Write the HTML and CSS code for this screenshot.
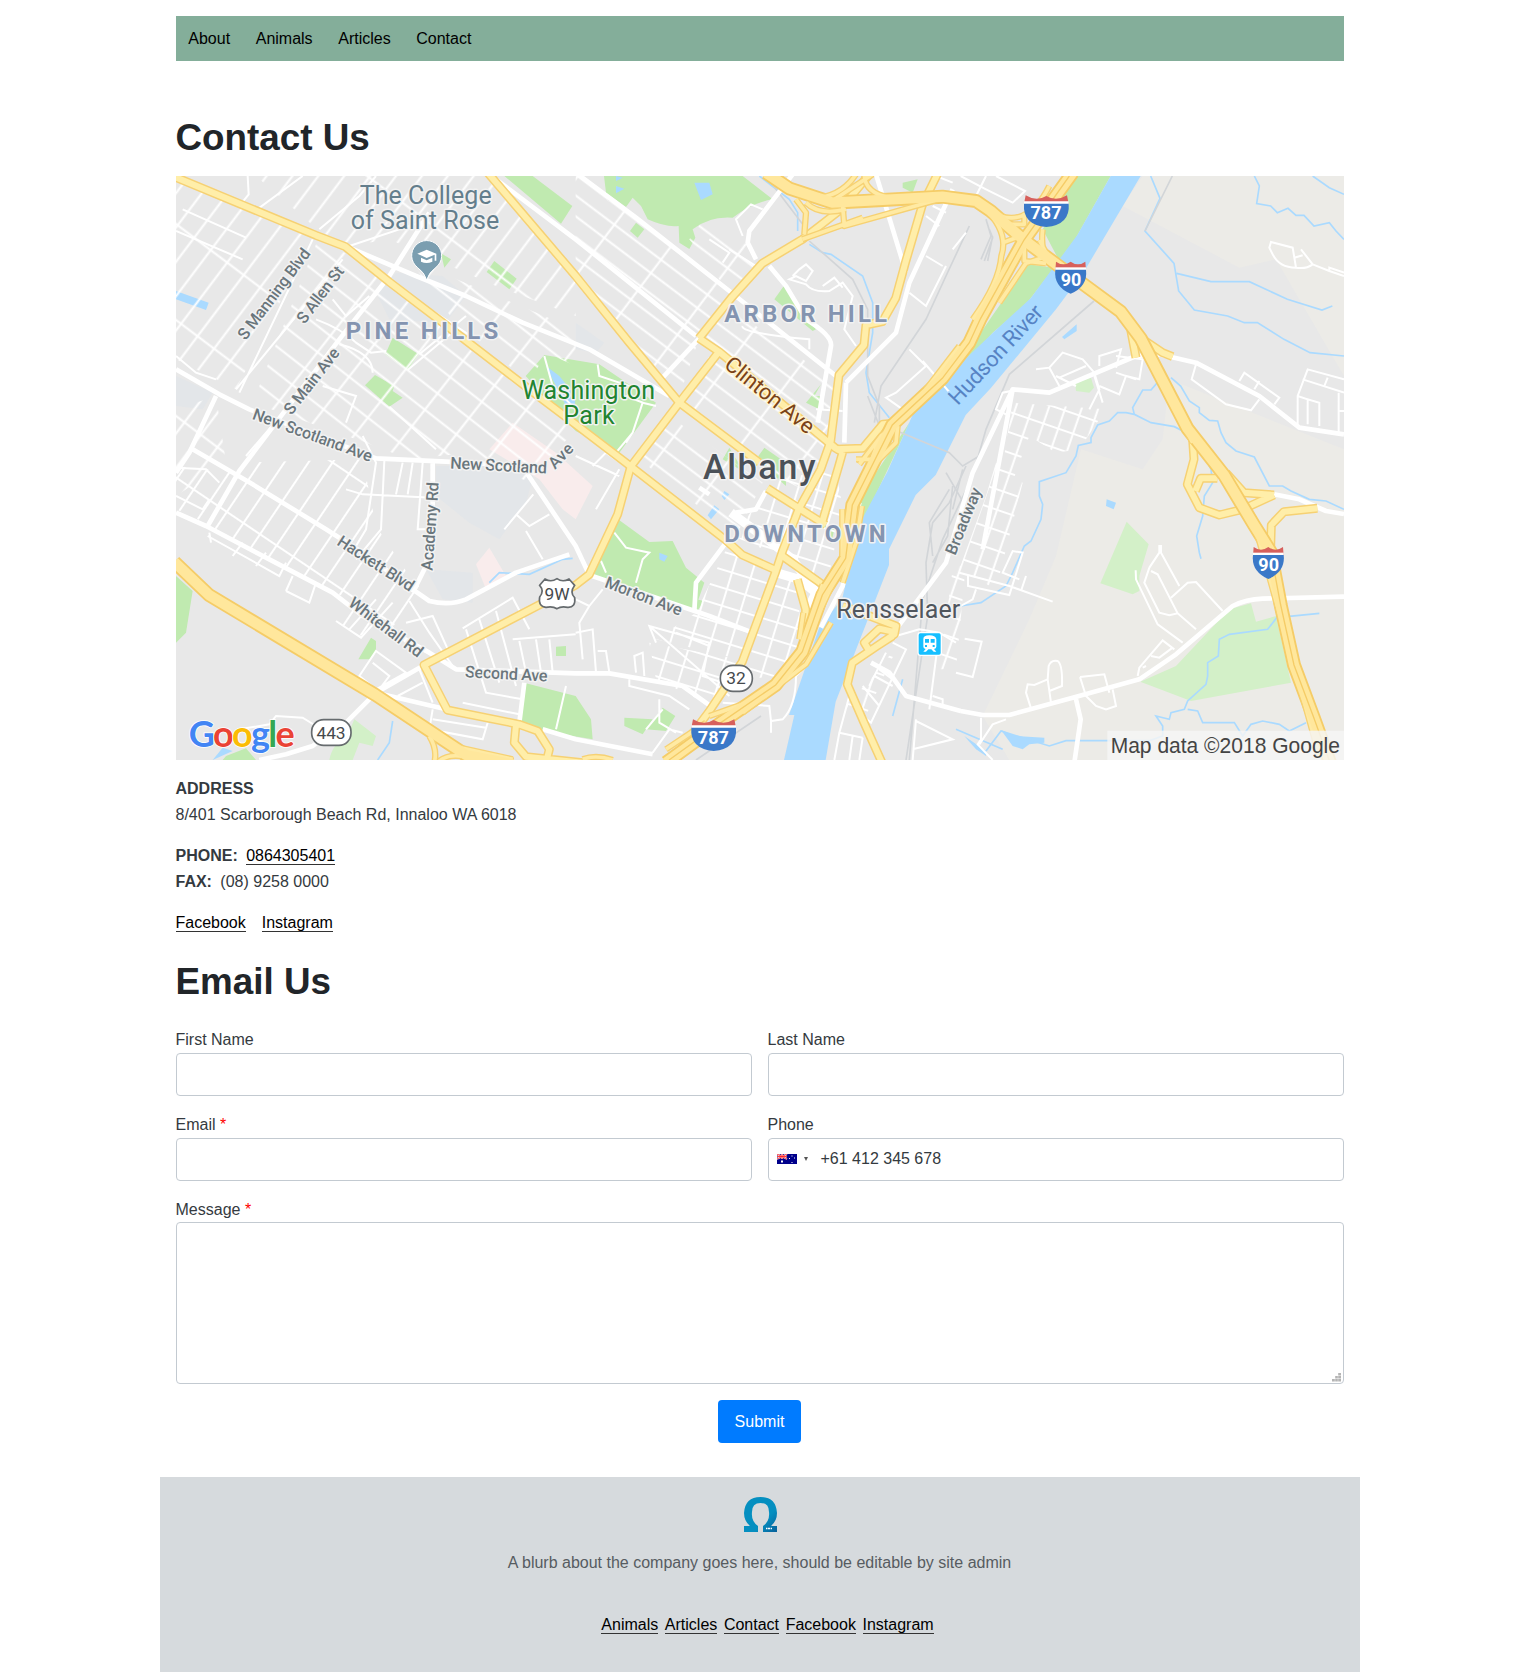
FILE: index.html
```html
<!DOCTYPE html>
<html lang="en">
<head>
<meta charset="utf-8">
<title>Contact Us</title>
<link rel="stylesheet" href="styles.css">
</head>
<body>
<div class="page">
<nav class="nav"><a href="#">About</a><a href="#">Animals</a><a href="#">Articles</a><a href="#">Contact</a></nav>
<main>
<h1>Contact Us</h1>
<svg class="map" viewBox="0 0 3504 1752" role="img" aria-label="Map of Albany">
<defs>
<pattern id="gridWest" width="62" height="230" patternUnits="userSpaceOnUse" patternTransform="rotate(37)"><path class="street" d="M31 0V230M0 115H62"/></pattern>
<pattern id="gridPine" width="120" height="62" patternUnits="userSpaceOnUse" patternTransform="rotate(38)"><path class="street" d="M60 0V62M0 31H120"/></pattern>
<pattern id="gridHill" width="175" height="50" patternUnits="userSpaceOnUse" patternTransform="rotate(37)"><path class="street" d="M88 0V50M0 25H175"/></pattern>
<pattern id="gridDown" width="58" height="52" patternUnits="userSpaceOnUse" patternTransform="rotate(17)"><path class="street" d="M29 0V52M0 26H58"/></pattern>
<pattern id="gridSouth" width="60" height="300" patternUnits="userSpaceOnUse" patternTransform="rotate(34)"><path class="street" d="M30 0V300M0 150H60"/></pattern>
<pattern id="gridEast" width="47" height="58" patternUnits="userSpaceOnUse" patternTransform="rotate(19)"><path class="street" d="M23 0V58M0 29H47"/></pattern>
<g id="arterials">
<path d="M-10 0L299 128 420 178 508 212 640 318 800 440 1060 640 1199 745 1365 872 1649 1092 1699 1137 1799 1182"/>
<path d="M935-10L1199 300 1360 500 1510 680 1750 860M1774 937L1869 997 1949 1047"/>
<path d="M1569 487L1629 527 1979 817 2000 828"/>
<path d="M1569 487L1669 362 1759 262 1879 190 1989 105 2080-5"/>
<path d="M1629 527L1510 680 1364 872 1325 1015 1240 1195 1199 1227 1089 1287 744 1467 814 1602 1029 1645 1085 1665 1120 1720 1110 1760M1020 1645L1015 1700 1050 1742 1220 1760"/>
<path d="M2284-5L2239 87 2189 257 2159 367 2119 437 2070 447 2064 507 1989 597 1964 795 1934 880 1869 997 1819 1127 1799 1187 1699 1457 1599 1607 1480 1765"/>
<path d="M1979 820L2060 817 2120 745 2155 742M2000 828L1989 867 1939 1037M1819 1140L1939 1225M1864 1210L1889 1300 1885 1400"/>
<path d="M2864 460L2880 545M2900 490L2960 530 2990 542M3050 790L3054 850 3034 925 3070 995 3130 1017 3200 1000 3294 957M3058 945L3074 907 3124 907M3150 890L3204 950 3294 957M3284 1110L3286 1047 3324 1007 3424 997"/>
<path d="M2000 1290L2060 1312 2160 1350 2155 1375 2029 1460 2014 1525 2064 1640 2119 1762M2150 1367L2110 1358 2065 1400 2080 1425 2150 1380"/>
</g>
<g id="highways">
<path d="M1770-10L1839 37 1969 80 2299 62 2400 75 2444 105 2544 192 2644 267 2834 407 2894 487 3034 757 3144 897 3234 1047 3284 1127 3314 1287 3354 1467 3414 1627 3464 1765"/>
<path d="M2690-10L2544 192 2414 427 2380 500 2299 607 2149 747 2089 867 2029 987 2009 1147 1939 1257 1879 1427 1799 1527 1639 1637 1470 1760"/>
<path d="M-5 1158L99 1257 599 1557 870 1737 1010 1765"/>
</g>
<g id="ramps">
<path d="M1860 70L1890 110 1885 175M1960 80L2090-5M1900 65Q1990 70 2040-5M2065-5Q2065 50 2140 65M1890 80Q1930 120 2010 100M2000 90L2005 150 2300 67M1879 190L2060 125"/>
<path d="M2425 95Q2500 170 2476 240Q2470 320 2390 430M2440 105Q2550 170 2620 30M2490 145H2545V110M2550 200Q2490 290 2400 465M2640 265Q2590 245 2600 160M2480 200L2520 185M2590 192L2615 240 2550 262 2470 380M2545 192V255L2610 262"/>
<path d="M2250 640L2350 510M2160 745L2115 780 2050 865M2165 750L2160 800 2070 890 2025 1010M2040 850H2090M2110 790L2035 990M1999 1000V1140M2058 990L2040 1100 2000 1220M1990 1180L1920 1330M1965 1340L1890 1465 1700 1610M1870 1390L1882 1310M1940 1225L1905 1340M1600 1620L1770 1560M1590 1640L1470 1720"/>
<path d="M760 1680Q785 1720 775 1760M830 1710L1010 1750M790 1755Q820 1730 880 1745M2900 505L3050 800M3240 1060L3430 1740M1220 1750Q1260 1735 1310 1752"/>
</g>
<g id="shieldWide"><path fill="#d7605c" d="M-62-45Q-30-25 0-43Q30-25 62-45L67-20H-67Z"/><path fill="#fff" d="M-67-27H67V-15H-67Z"/><path fill="#3a78c8" d="M-67-20H67Q72 43 0 50Q-72 43-67-20Z"/></g>
<g id="shield90"><path fill="#d7605c" d="M-44-46Q-22-30 0-46Q22-30 44-46L46-20H-46Z"/><path fill="#fff" d="M-46-29H46V-17H-46Z"/><path fill="#3a78c8" d="M-46-22H46Q52 28 0 50Q-52 28-46-22Z"/></g>
</defs>

<rect width="3504" height="1752" fill="#e8e8e8"/>
<g fill="#ecebe7">
<path d="M2900 0H3504V600L3300 250 3190 275 2840 90ZM2980 610L3504 820V1752H2500L2420 1620 2560 1330 2640 1140 2715 820 2900 880 2960 790Z"/>
</g>
<g fill="#e3e6e9"><path d="M600 350L660 290 800 300 870 360 820 425 780 440 640 430ZM780 870H1080L1050 980 970 1090 880 1040 780 960ZM750 1180L890 1190 890 1280 800 1270ZM0 600L110 650 80 700 0 690ZM1199 440L1285 500 1260 530 1199 520Z"/></g>
<g fill="#f9ecec"><path d="M1010 740L1140 830 1250 930 1199 1030 1160 1000 1090 910 940 820ZM900 1165L940 1115 990 1200 930 1240Z"/></g>
<g class="park">
<path d="M1284 0H1700L1790 70Q1730 80 1670 125Q1600 120 1550 160L1558 185 1540 219 1510 200 1508 150Q1470 155 1415 130L1395 90 1370 65 1350 93 1290 50Z"/>
<path d="M985 0H1070L1189 90 1155 143ZM955 255L1022 308 1000 340 932 288ZM795 232L825 250 805 275ZM650 485L728 535 695 582 628 535ZM597 597L655 630 650 645 680 665 640 692 567 628Z"/>
<path d="M1105 537L1270 565 1440 680 1330 830 1199 765 1049 600ZM1380 140L1405 160 1385 185 1362 165ZM1825 328L1860 380 1920 460 1910 465 1795 370ZM1935 625L1915 660 1940 660 1930 700 1890 680ZM1660 815L1640 850 1690 880 1690 865ZM1765 815L1740 850 1830 930 1830 860ZM2180 20L2225 10 2210 50 2180 35Z"/>
<path d="M2700 0H2804L2700 185 2650 255 2600 160ZM2555 265L2635 275 2550 385 2450 470 2340 600 2210 720 2140 870 2060 1040 2030 1080 2060 950 2200 740 2380 520Z"/>
<path d="M1320 1025L1420 1098 1490 1095 1530 1175 1585 1220 1555 1305 1250 1195 1300 1090ZM1560 1270L1585 1275 1560 1310ZM0 1200L50 1245 30 1370 0 1400ZM585 1385L600 1395 600 1430 580 1450 547 1450ZM1050 1522L1199 1560 1245 1630 1250 1690 1190 1680 1032 1655ZM1345 1625L1430 1630 1400 1675 1345 1650ZM1460 1595L1498 1620 1470 1665 1410 1660ZM1140 1412L1170 1410V1440L1140 1440ZM150 1740L210 1717 240 1752H140ZM1940 1045L1975 1060 1965 1105Z"/>
<g fill="#d3f0c8"><path d="M535 1630L600 1680 590 1710 550 1700 530 1752H460Q470 1700 510 1690ZM2852 1037L2918 1105 2890 1200 2890 1245 2870 1255 2773 1222ZM2893 1517L3000 1470 3160 1300 3225 1282 3240 1337 3300 1320 3345 1520 3045 1575ZM2697 620L2745 605 2754 635 2740 650 2700 645Z"/></g>
</g>
<g class="water">
<path d="M2804 0L2704 177 2564 367 2454 467 2349 567 2219 697 2134 887 2049 1047 1999 1267 1929 1357 1839 1617H1855L1824 1752H1949L1979 1577 2069 1347 2139 1167V1120L2219 957 2279 897 2369 717 2444 637 2640 400 2724 287 2894 0Z"/>
<path d="M0 345L98 380 90 402 0 370ZM1110 570L1150 600 1199 660 1195 700 1170 690ZM1555 20L1600 20 1610 55 1575 72ZM1320 0L1340 5 1320 15ZM1320 30L1345 38 1320 52ZM1450 1130L1475 1140 1465 1157 1450 1150ZM2658 483L2702 445V465L2665 490ZM2792 970L2820 980 2813 1000 2790 990ZM1645 945L1660 955 1645 972 1637 960ZM1615 988L1630 1000 1605 1030 1595 1018ZM2475 1662L2520 1680 2605 1685V1700L2560 1705 2540 1720 2510 1710ZM2365 1680L2430 1725V1740L2400 1720ZM140 1715L170 1725 110 1752Z"/>
</g>
<g class="stream">
<path d="M1750 0L1840 70 1865 110 1865 165M1900 205L1940 230 1965 235 2060 300 2090 380V470L2070 590 2080 650 2140 725"/>
<path d="M2924 0L2952 67 2907 165 2994 262 3008 345 3055 402 3155 420 3205 440 3244 440 3324 490 3402 530 3504 540M3002 292L3105 317H3220L3334 370 3438 402 3469 390"/>
<path d="M3235 0L3250 30 3242 83 3284 90 3304 110 3336 97 3360 118H3384L3414 150 3460 140 3480 165 3504 190M3410 0L3460 35 3504 55"/>
<path d="M2944 620L2925 642H2900L2870 695 2875 715 2925 740 2995 752 3060 785 3105 880M2875 715L2850 710 2825 710 2800 735 2765 747 2745 785V800L2707 808 2700 840 2670 890 2590 917V960L2600 985 2595 1030 2565 1095 2545 1110 2510 1190 2490 1230 2415 1280 2354 1290 2310 1300"/>
<path d="M2985 605L3014 630 3040 675 3070 695V710L3100 733 3125 735 3135 770 3150 800 3180 825 3235 843 3280 930 3320 930 3345 945 3400 970 3450 975 3504 1000M3105 880L3110 920 3085 960 3080 1020 3062 1080 3070 1130 3075 1148M3430 1312L3302 1325 3275 1360 3160 1375 3130 1390 3127 1440 3095 1460V1500L3090 1525 3035 1575 3025 1600 2985 1610 2980 1630 2940 1620 2960 1650V1680L2920 1694H2670L2620 1710 2475 1665 2430 1725M3035 1600L3065 1605 3080 1640H3175L3200 1680 3225 1645 3260 1635 3310 1645 3340 1665 3390 1640M2150 1620L2180 1510M2340 1660L2480 1720M650 1635L640 1700 605 1752M940 1220L970 1190 1060 1195 1160 1150 1190 1147"/>
</g>
<g class="rail">
<path d="M1770 0L1880 145M1900 195L2030 310 2075 400V600L2110 690V750L2075 660M2380 150L2310 300 2250 430 2115 630 2095 740M2140 755L2320 830 2360 870 2410 840M2989 0L2907 165M2754 375L2500 595 2430 760 2390 900 2300 1090 2240 1270 2200 1752M2370 870L2320 980 2270 1040 2250 1160 2255 1320 2190 1752M2320 940L2260 1040 2270 1140M2330 930L2315 1080 2270 1160M1755 1620L1560 1752"/>
<path d="M2430 130L2445 180 2415 250M2440 160L2450 185 2425 255M2450 180L2435 255M2310 890L2380 1010M2360 880L2330 1000"/>
</g>

<path fill="url(#gridWest)" d="M0 10L410 185 180 640 0 550ZM0 700L120 660 150 860 0 960Z"/>
<path fill="url(#gridWest)" d="M240 0H930L1100 190 1199 320 1199 420 960 330 640 190 520 210 430 165Z"/>
<path fill="url(#gridPine)" d="M430 180L640 320 880 520 1199 760 1060 920 880 830 700 850 570 800 230 680Z"/>
<path fill="url(#gridPine)" d="M700 250L1199 460 1199 570 1110 530 1060 620 830 430Z"/>
<path fill="url(#gridHill)" d="M1199 40L1330 85 1660 350 1570 485 1510 660 1199 280ZM1640 380L1980 620 1950 780 1590 490ZM1600 540L1960 820 1900 950 1800 900 1520 680ZM1480 720L1760 920 1680 1080 1390 850Z"/>
<path fill="url(#gridHill)" d="M1540 190L1590 120 1760 240 1660 350ZM1199 0H1280L1300 90 1199 50Z"/>
<path fill="url(#gridDown)" d="M1800 910L1980 880 2000 1000 1950 1240 1860 1160 1670 1080ZM1660 1100L1790 1190 1690 1450 1440 1390 1560 1310ZM1800 1200L1860 1210 1880 1400 1820 1500 1700 1510ZM1420 1400L1690 1450 1610 1590 1440 1510Z"/>
<path fill="url(#gridSouth)" d="M190 860L560 850 600 1050 720 1230 620 1330 480 1250 60 1040ZM580 1130L730 1230 640 1370 540 1380 480 1330ZM0 870L190 890 90 1040 0 1000Z"/>
<path fill="url(#gridEast)" d="M2510 680L2790 700 2710 820 2640 830 2560 780 2530 860 2440 1120ZM2460 860L2540 920 2460 1240 2350 1180 2430 960ZM2330 1180L2370 1160 2340 1480 2290 1480ZM2100 1490L2170 1400 2060 1640 2010 1590Z"/>

<g class="street">
<path d="M215 0L218 55 190 90M20 100L210 185M0 165L200 250M0 540L60 590 120 610M410 190L190 650M500 250L180 640M600 0L550 60 430 160M380 0L230 110M760 130L520 210M640 320L900 490M470 370L510 420 580 360M420 430Q500 460 540 500L585 530 630 525M440 630L540 660 510 740M730 535L870 420M695 582L840 460M640 692L780 820"/>
<path d="M490 505Q590 530 590 590M330 700L210 840M560 780L600 860 570 1060 540 1110M625 855L615 1060 540 1150M680 860L660 955M710 860L695 955M740 860L725 1060H760M510 940L560 955 770 965"/>
<path d="M1072 955L985 1060M1020 1015L1060 1050 1120 1015M1050 1065L1100 1150M860 1357L1010 1265 1060 1360M870 1360L930 1550 1040 1570M910 1330L970 1520M960 1305L1020 1530M1010 1390L1199 1375M1030 1395L1050 1490M1080 1390L1095 1490M1120 1390L1130 1490M1170 1530L1140 1660M700 1275L760 1370 830 1470M690 1340L770 1320 820 1430M645 1350L700 1410M730 1480L770 1580M600 1425L690 1490 600 1540 550 1500ZM590 1460L640 1500 610 1540M665 1560L740 1520M770 1600L760 1660 920 1690 935 1640M770 1630L930 1655M860 1580L1030 1615"/>
<path d="M1199 840L1330 900M1250 870L1290 830 1390 900M1330 880L1260 1000M1315 1070L1350 1115 1420 1130 1400 1150 1380 1220M1275 1155L1290 1190M1440 1400L1420 1350 1600 1400 1580 1500 1700 1540M1420 1350L1660 1560M1199 1270L1240 1290 1210 1340 1220 1450M1240 1290L1280 1240M1199 1370L1250 1360 1260 1490M1265 1425H1290L1300 1490M1380 1490L1375 1440 1400 1430 1405 1500M1360 1510V1530L1480 1560 1540 1600M1450 1570V1640L1500 1670M1410 1660L1460 1600M1430 1730L1480 1660 1520 1670M1500 1370L1600 1410"/>
<path d="M1850 300L1870 280 1890 265 1910 285 1890 315 1860 300 1840 310 1890 325Q1910 350 1960 345L2000 320 2030 360 2005 460 2040 510M1940 330L1975 305 2000 335M1700 180L1680 130 1725 85 1760 100M1660 220L1740 270M1600 190L1660 230 1640 260M1700 450Q1690 470 1900 490L1900 520M1920 700L2000 705M1940 640V700M2200 350L2250 390 2310 270M2250 240L2300 270M2200 520L2250 570 2160 650 2130 665 2180 700M2240 555L2330 660"/>
<path d="M2270 90L2310 110M2250 120L2290 150M2280 0L2330 20M2354 0L2430 40 2510 80 2547 45 2460 0M2400 60L2430 0M2330 220L2370 170"/>
<path d="M2530 640L2480 650 2460 700 2500 720M2580 580L2620 575 2660 530 2720 550 2755 590 2770 640 2740 700M2640 600L2700 630M2620 575L2650 630M2650 605L2730 570M2770 570V540L2835 520 2820 575M2770 630L2830 655 2850 600 2890 610 2900 550 2820 540M2820 590L2880 610M2755 600L2780 680"/>
<path d="M3060 565L3047 610 3150 685 3225 703 3250 670M3190 615L3205 590 3310 665 3295 685M3235 640L3250 615M3285 198L3350 215 3360 275Q3310 275 3290 235L3280 215ZM3375 220L3410 265Q3390 280 3360 275M3355 245L3380 238M3410 265L3460 285 3504 300M3460 285V275L3504 290M3365 745V660L3395 580 3504 610M3380 610L3504 650M3395 745V670L3430 680V750M3365 660L3395 670M3488 650V770M3455 605L3445 630M3488 705H3504"/>
<path d="M2350 1190L2500 1230 2630 1277M2376 1195V1230L2500 1257 2540 1130 2510 1125 2480 1190 2530 1210M2550 1200L2535 1245M2354 1290L2390 1270 2400 1240M2366 1388L2417 1397 2390 1503 2340 1490M2879 1183L2880 1210 2945 1345 3020 1400M2920 1175L2950 1130V1110H2955V1130L3010 1230M2920 1175L2905 1220 2950 1310 2980 1318 3005 1312 3060 1360M2925 1185L2945 1195 3005 1312M2985 1265L3035 1220 3060 1218 3140 1305M2885 1500L2890 1475 2960 1393 2995 1420M2900 1475L2910 1470M2925 1440L2950 1445 2990 1415M2565 1597L2550 1550 2555 1525 2575 1527 2615 1510 2618 1470Q2625 1450 2645 1455Q2660 1465 2658 1530L2620 1545M2615 1510L2625 1580M2712 1503L2785 1495 2800 1550M2712 1503L2730 1560 2760 1590 2790 1600 2820 1590 2810 1540M2415 1625V1690L2405 1705 2450 1752M2410 1705L2450 1645 2490 1630"/>
<path d="M1640 1580L1780 1590 1785 1635 1820 1630Q1860 1590 1860 1500L1890 1470M1785 1635V1670M2160 1380L2230 1360 2290 1370 2340 1400M2150 1400L2190 1420 2085 1640 2060 1620M2130 1430L2080 1530M2110 1480L2150 1510M2095 1500L2150 1530M2060 1530L2110 1590M2020 1560L1990 1670 1975 1752M1990 1670L2060 1685M2030 1680L2020 1752M2060 1685L2050 1752M2220 1630L2210 1752M2220 1635L2330 1690 2210 1720M2290 1370L2260 1600M2270 1560L2300 1570V1590"/>
<path d="M95 1080L310 1200 330 1160M105 1100L100 1070M170 1140L200 1100M240 1170L270 1130M330 1245L400 1280 420 1220M330 1245L350 1200M480 1335L555 1385 650 1280M520 1360L600 1270M0 960L80 1000 100 970M0 875L90 880 130 920M190 1660L280 1645 300 1620 380 1625 420 1650"/>
<path d="M1105 540L1130 630 1199 700M1265 565L1270 600 1390 640M1350 660L1400 680 1370 770 1320 830M1400 680L1440 690M1370 770L1350 800"/>
</g>
<g class="avenue">
<path d="M0 580L130 655 220 700 600 847 810 857 960 865 1080 890M520 215L720 300 870 360 1040 440 1240 520 1480 660M760 110L640 300 490 490 300 740 190 885 95 1050M120 660L40 830 0 890M960 10L1199 190 1560 480M1199-10L1380 125 1660 345 1980 600M1460 605L1570 487M2010 620L2160 470 2200 320 2330 40M2100-5L2190 290M50 820L230 925 450 1060 560 1130 710 1240 760 1275Q820 1290 870 1270L1020 1190 1180 1135M0 1010L90 1050 280 1150 470 1250 560 1320 760 1430 840 1480 1199 1492H1300L1520 1530 1610 1595M740 1470L600 1550 510 1640M600 1550L810 1600M770 857L770 1000 750 1170 710 1250M1055 895L1199 1110 1240 1197M1240 1197L1600 1320 1730 1370M1045 1520L1030 1640M1100 1660L1199 1690 1430 1735M2010 620L2005 800M1850-5L1720 165 1715 200 1740 250M1780 270L1830 330 1890 430Q1970 480 1965 510L1925 740"/>
<path d="M2420 1120L2510 640 2620 650 2880 540 2950 535 3060 560 3250 660 3370 755 3504 775M2510 640L2390 890 2310 1160 2160 1360M2354 1605L2420 1617H2500L2690 1565 2890 1510 3000 1435 3170 1290Q3210 1270 3260 1268L3504 1262M2085 1460L2140 1490 2190 1560 2354 1605M3294 955L3370 970 3450 1005 3504 1014M2700 1570L2714 1630 2695 1760M1555 1305L1560 1220 1650 1100M1680 1010L1740 1000 1770 945M250 1752L330 1735 410 1710 500 1640"/>
</g>
<g fill="none" stroke="#fff"><path stroke-width="27" d="M1665 1010L1780 1095 1850 1150 1920 1250M1800 1190L1870 1210 1920 1250M1920 1250L1885 1320"/><path stroke-width="14" d="M2050 980L2000 1230 1935 1355M1570 935L1600 955"/></g>

<use href="#arterials" class="art-case"/><use href="#arterials" class="art-core"/>
<use href="#highways" class="hwy-case"/><use href="#ramps" class="ramp-case"/>
<use href="#ramps" class="ramp-core"/><use href="#highways" class="hwy-core"/>
<path fill="none" stroke="#f5cc67" stroke-width="4" d="M2680 0L2544 192 2414 427 2380 500 2299 607 2149 747 2089 867 2029 987 2009 1147 1939 1257 1879 1427 1799 1527 1639 1637 1479 1752M3284 1127L3314 1287 3354 1467 3414 1627 3464 1765"/>

<g class="label poi"><text x="749" y="83" textLength="396">The College</text><text x="747" y="160" textLength="446">of Saint Rose</text></g>
<path fill="#7b9eb0" stroke="#fff" stroke-width="3" d="M752 312Q746 290 724 274A45 45 0 1 1 780 274Q758 290 752 312Z"/>
<path fill="#fff" d="M724 233L752 221 781 233V254H776V236L752 246ZM735 245L752 253 769 245V257Q752 265 735 257Z"/>
<g class="label district"><text x="738" y="489" textLength="458">PINE HILLS</text><text x="1889" y="439" textLength="488">ARBOR HILL</text><text x="1887" y="1099" textLength="484">DOWNTOWN</text></g>
<g class="label green"><text x="1237" y="668" textLength="400">Washington</text><text x="1239" y="743" textLength="154">Park</text></g>
<text class="label city" x="1750" y="908" textLength="338">Albany</text>
<text class="label town" x="2167" y="1325" textLength="372">Rensselaer</text>
<text class="label clinton" transform="translate(1780 659) rotate(39)" y="20" textLength="325">Clinton Ave</text>
<text class="label river" transform="translate(2459 536) rotate(-47)" y="22" textLength="380">Hudson River</text>
<g class="label road">
<text transform="translate(295 355) rotate(-53)" y="15" textLength="328">S Manning Blvd</text>
<text transform="translate(434 357) rotate(-53)" y="15" textLength="200">S Allen St</text>
<text transform="translate(408 616) rotate(-52)" y="15" textLength="238">S Main Ave</text>
<text transform="translate(410 777) rotate(20)" y="17" textLength="378">New Scotland Ave</text>
<text transform="translate(968 868) rotate(3)" y="17" textLength="290">New Scotland</text>
<text transform="translate(1154 839) rotate(-46)" y="17" textLength="84">Ave</text>
<text transform="translate(762 1051) rotate(-86)" y="17" textLength="266">Academy Rd</text>
<text transform="translate(600 1162) rotate(33)" y="17" textLength="264">Hackett Blvd</text>
<text transform="translate(630 1353) rotate(37)" y="17" textLength="264">Whitehall Rd</text>
<text transform="translate(991 1493) rotate(3)" y="17" textLength="248">Second Ave</text>
<text transform="translate(1403 1260) rotate(21)" y="17" textLength="244">Morton Ave</text>
<text transform="translate(2362 1035) rotate(-68)" y="17" textLength="212">Broadway</text>
</g>
<use href="#shieldWide" x="2611" y="103"/><use href="#shieldWide" x="1613" y="1675"/><use href="#shield90" x="2684" y="303"/><use href="#shield90" x="3277" y="1159"/>
<g class="shield-text"><text x="2610" y="128">787</text><text x="1612" y="1704">787</text><text x="2685" y="329">90</text><text x="3278" y="1186">90</text></g>
<g fill="#fff" stroke="#666b6e" stroke-width="5"><rect x="407" y="1631" width="118" height="77" rx="36"/><rect x="1633" y="1468" width="96" height="78" rx="38"/><path d="M1107 1209Q1125 1220 1143 1208Q1160 1220 1179 1209L1196 1228Q1180 1250 1196 1265Q1200 1295 1175 1294Q1155 1290 1143 1298Q1130 1290 1110 1294Q1086 1292 1091 1263Q1106 1245 1091 1228Z"/></g>
<g class="route"><text x="465" y="1689">443</text><text x="1680" y="1525">32</text><text x="1143" y="1273">9W</text></g>
<g><rect x="2226" y="1370" width="70" height="68" rx="7" fill="#16bfff" stroke="#fff" stroke-width="4"/><path fill="#fff" d="M2242 1389Q2242 1378 2260 1378T2281 1389V1412Q2281 1418 2274 1419L2281 1427H2273L2266 1420H2257L2250 1427H2242L2249 1419Q2242 1418 2242 1412Z"/><path fill="#16bfff" d="M2247 1389H2259V1400H2247ZM2264 1389H2276V1400H2264ZM2247 1407H2253V1413H2247ZM2270 1407H2276V1413H2270Z"/></g>
<text class="google" x="38" y="1713" textLength="318"><tspan fill="#4285f4">G</tspan><tspan fill="#ea4335">o</tspan><tspan fill="#fbbc05">o</tspan><tspan fill="#4285f4">g</tspan><tspan fill="#34a853">l</tspan><tspan fill="#ea4335">e</tspan></text>
<rect x="2794" y="1664" width="710" height="88" fill="#f5f5f5" opacity=".82"/><text class="credit" x="2804" y="1731" textLength="688" lengthAdjust="spacingAndGlyphs">Map data ©2018 Google</text>
</svg>
<div class="details">
<p><strong>ADDRESS</strong><br>8/401 Scarborough Beach Rd, Innaloo WA 6018</p>
<p><strong class="term">PHONE:</strong><a href="#">0864305401</a><br><strong class="term">FAX:</strong>(08) 9258 0000</p>
<p class="social"><a href="#">Facebook</a><a href="#">Instagram</a></p>
</div>
<h2>Email Us</h2>
<form class="form">
<label class="field">First Name<span class="box"></span></label>
<label class="field">Last Name<span class="box"></span></label>
<label class="field"><span>Email <b>*</b></span><span class="box"></span></label>
<label class="field">Phone<span class="box phone">
<svg class="flag" viewBox="0 0 20 10"><path fill="#00008b" d="M0 0H20V10H0Z"/><path stroke="#fff" stroke-width="1.7" d="M0 0L10 5M10 0L0 5M5 0V5M0 2.5H10"/><path stroke="#f22" stroke-width=".9" d="M0 0L10 5M10 0L0 5M5 0V5M0 2.5H10"/><path fill="#fff" d="M4 6.5H6V8.6H4ZM14.5 1.5H15.5V2.5H14.5ZM12 4H13V5H12ZM17 3.5H18V4.5H17ZM14.5 8H15.5V9H14.5Z"/></svg><i class="caret"></i>+61 412 345 678</span></label>
<label class="field wide"><span>Message <b>*</b></span><span class="box message"><svg class="grip" viewBox="0 0 9 9"><path fill="#b4b4b4" d="M6 0H9V2.500H6ZM3 3H9V5.500H3ZM0 6H9V8.500H0Z"/><path stroke="#fff" stroke-width=".4" d="M3 0V9M6 0V9"/></svg></span></label>
<button class="submit" type="button">Submit</button>
</form>
</main>
</div>
<footer class="footer">
<svg class="logo" viewBox="0 0 33 35"><defs><linearGradient id="ink" x1="0" y1="0" x2="1" y2="1"><stop offset=".65" stop-color="#058fc0"/><stop offset="1" stop-color="#075f99"/></linearGradient></defs><path fill="url(#ink)" d="M0 35V29H6Q0 24 0 16Q1 0 16.500 0T33 16Q33 24 27 29H33V35H19V29Q26 24 25 15Q25 6 16.500 6T8 15Q7 24 14 29V35Z"/><path stroke="#fff" stroke-width="1.600" stroke-dasharray="1.500 .5 2 .6" d="M22 31.500H28"/></svg>
<p>A blurb about the company goes here, should be editable by site admin</p>
<div class="footer-links"><a href="#">Animals</a><a href="#">Articles</a><a href="#">Contact</a><a href="#">Facebook</a><a href="#">Instagram</a></div>
</footer>
</body>
</html>
```
FILE: styles.css
```css
* { box-sizing: border-box; }
body { margin: 0; font: 16px/1.6 "Liberation Sans", Arial, sans-serif; color: #343a40; background: #fff; }
.page { width: 1168px; margin: 0 auto; padding-top: 16px; }
a { color: #000; text-decoration: none; }
.nav { display: flex; gap: 25.6px; padding: 9.6px 12.8px; background: #84ae9a; }
h1, h2 { font-size: 36.8px; line-height: 44px; color: #212529; }
h1 { margin: 55.2px 0 16px; }
h2 { margin: 23.4px 0 23.4px; }
.map { display: block; width: 1168px; height: 584px; font-family: Roboto, sans-serif; }
.details { padding-top: 15.6px; line-height: 26px; }
.details p { margin: 0 0 15.4px; }
.details p a, .footer-links a { display: inline-block; line-height: 16px; border-bottom: 1px solid #333; }
.term { margin-right: 8.4px; }
.details .social { display: flex; align-items: flex-start; gap: 16px; height: 26px; padding-top: 5px; }
.form { display: grid; grid-template-columns: 1fr 1fr; gap: 16px; }
.field { display: flex; flex-direction: column; }
.field b { font-weight: 400; color: #f00; }
.box { display: flex; align-items: center; height: 43.2px; border: 1px solid #c3cad1; border-radius: 4px; }
.wide { grid-column: 1 / -1; }
.message { height: 162px; align-items: flex-end; justify-content: flex-end; padding: 0 2px 1px 0; }
.grip { width: 9px; height: 9px; }
.phone { padding-left: 8px; }
.flag { width: 20px; height: 10px; margin-right: 7px; }
.caret { border: 2.5px solid transparent; border-top: 4px solid #555; border-bottom: 0; margin-right: 13px; }
.submit { grid-column: 1 / -1; justify-self: center; width: 83.2px; height: 43.2px; border: 0; border-radius: 4px; background: #007bff; color: #fff; font: inherit; }
.footer { width: 1200px; height: 195px; margin: 34px auto 0; padding-top: 20px; display: flex; flex-direction: column; align-items: center; background: #d6dadd; color: #565c61; }
.logo { width: 33px; height: 35px; margin-left: 1px; }
.footer p { margin: 18px 0 40px; }
.footer-links { display: flex; gap: 6.6px; margin-left: 16px; padding-top: 1px; }
.street { fill: none; stroke: #fff; stroke-width: 6; }
.avenue { fill: none; stroke: #fff; stroke-width: 14; stroke-linejoin: round; }
.rail { fill: none; stroke: #d2d5d8; stroke-width: 5; }
.stream { fill: none; stroke: #aadaff; stroke-width: 5; }
.water { fill: #aadaff; }
.park { fill: #c0eab0; }
.art-case, .art-core, .hwy-case, .hwy-core, .ramp-case, .ramp-core { fill: none; stroke-linejoin: round; }
.art-case { stroke: #f6d173; stroke-width: 27; }
.art-core { stroke: #ffeea9; stroke-width: 18; }
.hwy-case { stroke: #f5cc67; stroke-width: 42; }
.hwy-core { stroke: #ffe79c; stroke-width: 31; }
.ramp-case { stroke: #f6d173; stroke-width: 19; }
.ramp-core { stroke: #ffeaa3; stroke-width: 11; }
.label { text-anchor: middle; paint-order: stroke; stroke: #f2f2f2; stroke-width: 9px; stroke-linejoin: round; }
.poi { fill: #647e8c; font-size: 75px; }
.district { fill: #8494b0; font-size: 72px; font-weight: 700; }
.green { fill: #218430; font-size: 75px; }
.city { fill: #4b5158; font-size: 103px; font-weight: 500; }
.town { fill: #50565d; font-size: 75px; }
.clinton { fill: #7b4317; font-size: 66px; stroke: #fff3d0; }
.river { fill: #5683c4; font-size: 66px; stroke: #aadaff; }
.road { fill: #6a767c; font-size: 49px; font-weight: 500; }
.shield-text { fill: #fff; font-size: 54px; font-weight: 700; text-anchor: middle; }
.route { fill: #45494c; font-size: 52px; text-anchor: middle; }
.google { font-family: Lato, sans-serif; font-size: 108px; font-weight: 700; paint-order: stroke; stroke: #fff; stroke-width: 5px; }
.credit { fill: #444; font-family: "Liberation Sans", Arial, sans-serif; font-size: 67px; }
```
